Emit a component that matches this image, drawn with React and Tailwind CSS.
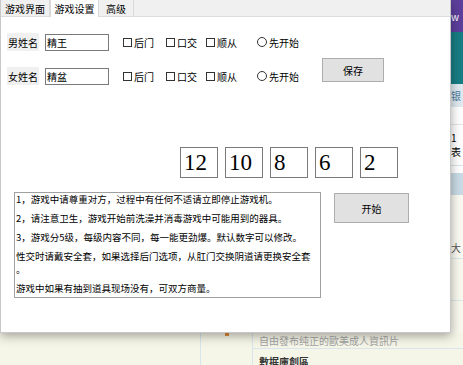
import React from 'react';

const cjk = { fontFamily: '"Noto Sans CJK SC", "Noto Sans", sans-serif' };

function Check({ label, className }) {
    return (
        <div className={`flex shrink-0 items-center gap-[2px] ${className}`}>
            <div className="w-[9px] h-[9px] border border-[#333] bg-white" />
            <span>{label}</span>
        </div>
    );
}

function Radio({ label, className }) {
    return (
        <div className={`flex shrink-0 items-center gap-[2px] ${className}`}>
            <div className="w-[10px] h-[10px] rounded-full border border-[#333] bg-white" />
            <span>{label}</span>
        </div>
    );
}

// one row of name label + input + options
function NameRow({ label, value }) {
    return (
        <div className="flex items-center h-[18px] whitespace-nowrap">
            <div className="ml-[6px] shrink-0 w-[32px] h-[18px] bg-[#f0f0f0] flex items-center pl-[1px]">{label}</div>
            <div className="ml-[6px] shrink-0 w-[64px] h-[17px] border border-[#7a7a7a] bg-white flex items-center pl-[1px]">{value}</div>
            <Check label="后门" className="ml-[14px]" />
            <Check label="口交" className="ml-[12px]" />
            <Check label="顺从" className="ml-[9px]" />
            <Radio label="先开始" className="ml-[20px]" />
        </div>
    );
}

const numbers = ['12', '10', '8', '6', '2'];

const notes = [
    ['1，游戏中请尊重对方，过程中有任何不适请立即停止游戏机。'],
    ['2，请注意卫生，游戏开始前洗澡并消毒游戏中可能用到的器具。'],
    ['3，游戏分5级，每级内容不同，每一能更劲爆。默认数字可以修改。'],
    ['性交时请戴安全套，如果选择后门选项，从肛门交换阴道请更换安全套', '。'],
    ['游戏中如果有抽到道具现场没有，可双方商量。'],
];

function Dialog() {
    return (
        <div className="absolute left-0 top-0 w-[451px] h-[333px] bg-white border-l border-r border-b border-[#c8c8c8] shadow-[0_3px_10px_rgba(0,0,0,0.35)] text-[10px] text-black flex flex-col" style={cjk}>
            {/* tab strip */}
            <div className="flex items-end h-[17px] bg-[#f0f0f0] border-b border-[#dcdcdc]">
                <div className="w-[49px] h-[16px] flex items-center justify-center border-r border-[#d9d9d9]">游戏界面</div>
                <div className="w-[49px] h-[17px] -mb-px bg-white border-l border-r border-[#d9d9d9] flex items-center justify-center">游戏设置</div>
                <div className="w-[35px] h-[16px] flex items-center justify-center border-r border-[#d9d9d9]">高级</div>
            </div>

            <div className="mt-[16px]">
                <NameRow label="男姓名" value="精王" />
            </div>

            <div className="flex items-start mt-[7px]">
                <div className="mt-[9px] w-[298px] shrink-0">
                    <NameRow label="女姓名" value="精盆" />
                </div>
                <div className="ml-[23px] shrink-0 w-[62px] h-[24px] bg-[#e1e1e1] border border-[#adadad] flex items-center justify-center">保存</div>
            </div>

            <div className="flex gap-[7px] ml-[179px] mt-[62px]">
                {numbers.map((n) => (
                    <div key={n} className="w-[38px] h-[31px] border border-[#7a7a7a] bg-white flex items-center pl-[3px] text-[23px] leading-none" style={{ fontFamily: '"Liberation Serif", serif' }}>
                        {n}
                    </div>
                ))}
            </div>

            <div className="flex items-start mt-[14px]">
                <div className="ml-[13px] w-[307px] h-[106px] border border-[#a0a0a0] bg-white pl-[1px] pt-0 text-[9.5px] leading-[13px] flex flex-col gap-[6px]">
                    {notes.map((p, i) => (
                        <div key={i}>
                            {p.map((line, j) => (
                                <div key={j}>{line}</div>
                            ))}
                        </div>
                    ))}
                </div>
                <div className="ml-[13px] mt-px w-[75px] h-[30px] bg-[#e1e1e1] border border-[#adadad] flex items-center justify-center">开始</div>
            </div>
        </div>
    );
}

function Backdrop() {
    return (
        <div className="w-[463px] h-[365px] flex flex-col bg-[#f6f6e8] overflow-hidden">
            <div className="flex h-[333px]">
                <div className="w-[451px]" />
                <div className="w-[12px] overflow-hidden flex flex-col text-[10px] text-[#555]" style={cjk}>
                    <div className="h-[32px] bg-[#5d3f9c] text-white flex items-center">w</div>
                    <div className="h-[52px] bg-[#177e83]" />
                    <div className="h-[23px] bg-[#dfe9ef] text-[#4a7aa0] flex items-center">银</div>
                    <div className="h-[18px] bg-white border-b border-[#e6e6e6]" />
                    <div className="h-[40px] bg-white flex flex-col justify-center leading-[14px] text-black">
                        <span>1</span>
                        <span>表</span>
                    </div>
                    <div className="h-[8px] border-t border-[#d8e4ea] bg-white" />
                    <div className="h-[22px] bg-[#c9dbe6]" />
                    <div className="h-[42px] bg-[#fafaf2]" />
                    <div className="h-[22px] flex items-center bg-[#fafaf2] border-b border-[#dbe8ea]">大</div>
                    <div className="h-[42px] bg-[#f8f8ee] border-b border-[#dbe8ea]" />
                    <div className="flex-1 bg-[#f8f8ee]" />
                </div>
            </div>
            <div className="flex h-[32px] text-[10px]" style={cjk}>
                <div className="w-[201px] border-r border-[#d6e6ea]" />
                <div className="w-[52px] border-r border-[#d6e6ea] flex justify-center">
                    <div className="w-[4px] h-[3px] bg-[#e08a3a]" />
                </div>
                <div className="flex-1 flex flex-col">
                    <div className="h-[20px] flex items-end pl-[6px] text-[#a3a3a3] border-b border-[#d6e6ea]">自由發布纯正的歐美成人資訊片</div>
                    <div className="pl-[6px] pt-[5px] font-bold text-[#333]">數据庫創區</div>
                </div>
            </div>
        </div>
    );
}

export default function App() {
    return (
        <div className="relative w-[463px] h-[365px] overflow-hidden">
            <Backdrop />
            <Dialog />
        </div>
    );
}
